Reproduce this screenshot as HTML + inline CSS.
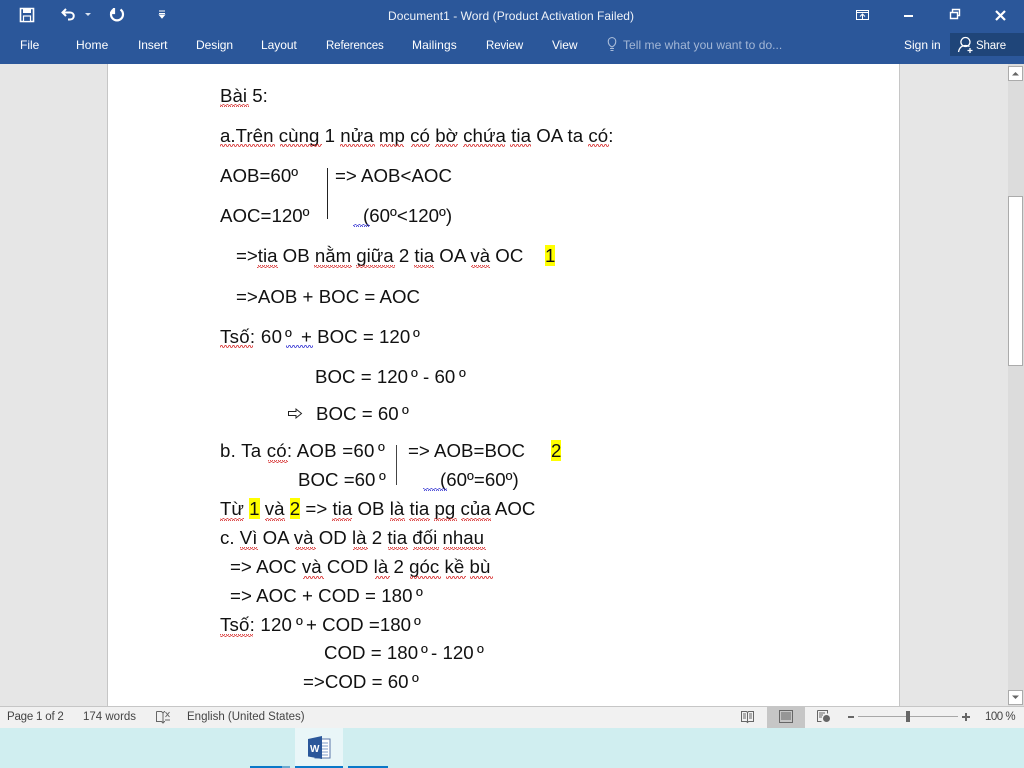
<!DOCTYPE html>
<html><head><meta charset="utf-8"><style>
html,body{margin:0;padding:0;width:1024px;height:768px;overflow:hidden;background:#fff}
div,span.a{position:absolute}
.t{position:absolute;white-space:nowrap;font-family:"Liberation Sans",sans-serif;font-size:12px;line-height:16px;color:#fff}
.l{position:absolute;white-space:pre;font-family:"Liberation Sans",sans-serif;font-size:18.67px;line-height:22px;color:#111;letter-spacing:.03px}
.l b{font-weight:normal;background:#ff0}
.s{position:absolute;white-space:nowrap;font-family:"Liberation Sans",sans-serif;font-size:11.5px;line-height:14px;color:#444}
svg{position:absolute;overflow:visible}
</style></head><body>
<div style="left:0;top:0;width:1024px;height:64px;background:#2b579a"></div>
<div style="left:950px;top:33px;width:74px;height:23px;background:#1f4579"></div>

<svg style="left:0;top:0" width="1024" height="64" fill="none" stroke="#fff">
<path d="M20.500 8.500h13v13h-13z" stroke-width="1.600"/><rect x="23" y="8" width="8" height="5" fill="#fff" stroke="none"/><rect x="23.500" y="16" width="7" height="5.500" fill="#2b579a" stroke-width="1.200"/>
<path d="M66 9l-3.500 3.500 3.500 3.500M63 12.500h7c5 0 5 7 0 7h-2" stroke-width="2"/>
<path d="M85 13h6l-3 3z" fill="#d8e2f0" stroke="none"/>
<path d="M113.500 9.500a6 6 0 1 0 7 0M114 8v5h-4" stroke-width="2.200"/>
<path d="M159 11h6M159 13.500h6M159.500 15l2.500 3 2.500-3z" fill="#fff" stroke-width="1"/>
<path d="M856.500 10.500h12v9h-12zM857 12.500h11M860 16.500l2.500-2.500 2.500 2.500M862.500 14v5" stroke-width="1"/>
<path d="M904 16h9" stroke-width="2"/>
<path d="M950.500 12.500h7v6h-7zM952.500 12v-2.500h7v6h-2" stroke-width="1.400"/>
<path d="M996 11l9 9M1005 11l-9 9" stroke-width="2.200"/>
<path d="M965.500 37.500a4.500 4.500 0 1 1-.1 0zM958.500 52c1-5 3.500-6.500 7-6.500 1.500 0 3 .3 4 1M970 48v5M967.500 50.500h5" stroke-width="1.300"/>
<path d="M612 47.500c-5-2.500-5-9 0-9.500 5 .5 5 7 0 9.500zM610 49h4M610.500 51h3" stroke="#a9bcd9" stroke-width="1.100" transform="translate(0,-.5)"/>
</svg>

<span class="t" style="left:388px;top:8px;letter-spacing:.05px;color:#eef2f8">Document1 - Word (Product Activation Failed)</span>
<span class="t" style="left:20px;top:37px">File</span>
<span class="t" style="left:76px;top:37px;letter-spacing:.1px">Home</span>
<span class="t" style="left:138px;top:37px;letter-spacing:-.1px">Insert</span>
<span class="t" style="left:196px;top:37px;letter-spacing:-.05px">Design</span>
<span class="t" style="left:261px;top:37px;letter-spacing:-.05px">Layout</span>
<span class="t" style="left:326px;top:38px;font-size:11.5px;letter-spacing:-.12px">References</span>
<span class="t" style="left:412px;top:37px;letter-spacing:.1px">Mailings</span>
<span class="t" style="left:486px;top:38px;font-size:11.5px;letter-spacing:-.1px">Review</span>
<span class="t" style="left:552px;top:37px;letter-spacing:-.1px">View</span>
<span class="t" style="left:623px;top:37px;color:#a3b7d6;letter-spacing:.04px">Tell me what you want to do...</span>
<span class="t" style="left:904px;top:37px;letter-spacing:0">Sign in</span>
<span class="t" style="left:976px;top:38px;font-size:11.5px;letter-spacing:-.15px">Share</span>

<div style="left:0;top:64px;width:1024px;height:643px;background:#e6e6e6"></div>
<div style="left:107px;top:64px;width:793px;height:642px;background:#fff;border-left:1px solid #c6c6c6;border-right:1px solid #c6c6c6;box-sizing:border-box"></div>
<div style="left:0;top:706px;width:1024px;height:1px;background:#c6c6c6"></div>

<div style="left:1008px;top:64px;width:16px;height:642px;background:#dcdcdc"></div>
<div style="left:1008px;top:66px;width:15px;height:15px;background:#fff;border:1px solid #ababab;box-sizing:border-box"></div>
<div style="left:1008px;top:196px;width:15px;height:170px;background:#fff;border:1px solid #ababab;box-sizing:border-box"></div>
<div style="left:1008px;top:690px;width:15px;height:15px;background:#fff;border:1px solid #ababab;box-sizing:border-box"></div>
<svg style="left:0;top:0" width="1024" height="768"><path d="M1012 75.500l3.500-3.500 3.500 3.500z" fill="#666"/><path d="M1012 695.500h7l-3.500 3.500z" fill="#666"/></svg>

<span class="l" style="left:220px;top:85px">Bài 5:</span>
<span class="l" style="left:220px;top:125px;letter-spacing:.05px">a.Trên cùng 1 nửa mp có bờ chứa tia OA ta có:</span>
<span class="l" style="left:220px;top:165px">AOB=60º</span>
<span class="l" style="left:335px;top:165px">=&gt; AOB&lt;AOC</span>
<span class="l" style="left:220px;top:205px">AOC=120º</span>
<span class="l" style="left:363px;top:205px">(60º&lt;120º)</span>
<span class="l" style="left:236px;top:245px;letter-spacing:0">=&gt;tia OB nằm giữa 2 tia OA và OC</span>
<span class="l" style="left:545px;top:245px"><b>1</b></span>
<span class="l" style="left:236px;top:286px">=&gt;AOB + BOC = AOC</span>
<span class="l" style="left:220px;top:326px;letter-spacing:.3px">Tsố: 60</span><span class="l" style="left:285px;top:326px">º</span><span class="l" style="left:301px;top:326px">+ BOC = 120</span><span class="l" style="left:413px;top:326px">º</span>
<span class="l" style="left:315px;top:366px">BOC = 120</span><span class="l" style="left:411px;top:366px">º</span><span class="l" style="left:423px;top:366px">- 60</span><span class="l" style="left:459px;top:366px">º</span>
<svg style="left:288px;top:408px" width="15" height="12" fill="none" stroke="#222"><path d="M.5 3.500h7.500v-2.500l5.500 4.500-5.500 4.500v-2.500h-7.500z" stroke-width="1"/></svg>
<span class="l" style="left:316px;top:403px">BOC = 60</span><span class="l" style="left:402px;top:403px">º</span>
<span class="l" style="left:220px;top:440px;letter-spacing:.24px">b. Ta có: AOB =60</span><span class="l" style="left:378px;top:440px">º</span>
<span class="l" style="left:408px;top:440px">=&gt; AOB=BOC</span>
<span class="l" style="left:551px;top:440px"><b>2</b></span>
<span class="l" style="left:298px;top:469px">BOC =60</span><span class="l" style="left:379px;top:469px">º</span>
<span class="l" style="left:440px;top:469px">(60º=60º)</span>
<span class="l" style="left:220px;top:498px;letter-spacing:.03px">Từ <b>1</b> và <b>2</b> =&gt; tia OB là tia pg của AOC</span>
<span class="l" style="left:220px;top:527px;letter-spacing:.02px">c. Vì OA và OD là 2 tia đối nhau</span>
<span class="l" style="left:230px;top:556px;letter-spacing:.04px">=&gt; AOC và COD là 2 góc kề bù</span>
<span class="l" style="left:230px;top:585px;letter-spacing:.06px">=&gt; AOC + COD = 180</span><span class="l" style="left:416px;top:585px">º</span>
<span class="l" style="left:220px;top:614px;letter-spacing:.2px">Tsố: 120</span><span class="l" style="left:296px;top:614px">º</span><span class="l" style="left:306px;top:614px">+ COD =180</span><span class="l" style="left:414px;top:614px">º</span>
<span class="l" style="left:324px;top:642px">COD = 180</span><span class="l" style="left:421px;top:642px">º</span><span class="l" style="left:431px;top:642px">- 120</span><span class="l" style="left:477px;top:642px">º</span>
<span class="l" style="left:303px;top:671px">=&gt;COD = 60</span><span class="l" style="left:412px;top:671px">º</span>

<div style="left:327px;top:168px;width:1px;height:51px;background:#222"></div>
<div style="left:396px;top:445px;width:1px;height:40px;background:#444"></div>

<svg style="left:0;top:0" width="1024" height="768" fill="none">
<defs>
<pattern id="r" width="4" height="3" patternUnits="userSpaceOnUse"><path d="M0 2.500L1 .5 2 .5 3 2.500 4 2.500" stroke="#d42020" stroke-width=".8" fill="none"/></pattern>
<pattern id="b" width="4" height="3" patternUnits="userSpaceOnUse"><path d="M0 2.500L1 .5 2 .5 3 2.500 4 2.500" stroke="#2a2ad0" stroke-width=".8" fill="none"/></pattern>
</defs>
<g fill="url(#r)">
<rect x="220" y="104" width="29" height="3"/>
<rect x="220" y="144" width="55" height="3"/><rect x="280" y="144" width="42" height="3"/><rect x="340" y="144" width="35" height="3"/><rect x="380" y="144" width="24" height="3"/><rect x="411" y="144" width="19" height="3"/><rect x="435" y="144" width="23" height="3"/><rect x="463" y="144" width="42" height="3"/><rect x="510" y="144" width="21" height="3"/><rect x="588" y="144" width="21" height="3"/>
<rect x="257" y="265" width="21" height="3"/><rect x="314" y="265" width="38" height="3"/><rect x="356" y="265" width="39" height="3"/><rect x="414" y="265" width="20" height="3"/><rect x="471" y="265" width="19" height="3"/>
<rect x="220" y="345" width="33" height="3"/>
<rect x="268" y="460" width="20" height="3"/>
<rect x="220" y="518" width="24" height="3"/><rect x="265" y="518" width="20" height="3"/><rect x="332" y="518" width="20" height="3"/><rect x="390" y="518" width="15" height="3"/><rect x="409" y="518" width="21" height="3"/><rect x="434" y="518" width="23" height="3"/><rect x="461" y="518" width="30" height="3"/>
<rect x="240" y="547" width="18" height="3"/><rect x="295" y="547" width="21" height="3"/><rect x="353" y="547" width="15" height="3"/><rect x="388" y="547" width="20" height="3"/><rect x="413" y="547" width="26" height="3"/><rect x="443" y="547" width="43" height="3"/>
<rect x="303" y="576" width="21" height="3"/><rect x="375" y="576" width="15" height="3"/><rect x="410" y="576" width="31" height="3"/><rect x="446" y="576" width="20" height="3"/><rect x="470" y="576" width="23" height="3"/>
<rect x="220" y="634" width="33" height="3"/>
</g>
<g fill="url(#b)">
<rect x="353" y="224" width="17" height="3"/>
<rect x="286" y="345" width="27" height="3"/>
<rect x="423" y="488" width="24" height="3"/>
</g>
</svg>

<div style="left:0;top:707px;width:1024px;height:21px;background:#f1f1f1"></div>
<span class="s" style="left:7px;top:710px;letter-spacing:-.2px">Page 1 of 2</span>
<span class="s" style="left:83px;top:710px">174 words</span>
<span class="s" style="left:187px;top:710px">English (United States)</span>
<span class="s" style="left:985px;top:710px;letter-spacing:-.5px">100 %</span>
<div style="left:767px;top:707px;width:38px;height:21px;background:#c6c6c6"></div>
<svg style="left:0;top:0" width="1024" height="768" fill="none" stroke="#666">
<path d="M156.500 711.500h5l1.500 1.500 1.500-1.500h.5M156.500 711.500v10h5l1.500 1.500 1.500-1.500h.5M163 713v10" stroke-width="1"/><path d="M165.500 712l4 5M169.500 712l-4 5M165 720h5" stroke-width="1"/>
<path d="M741.500 711.500h5l1 1 1-1h5v10h-5l-1 1-1-1h-5zM747.500 712.500v10M743 714h3M743 716h3M743 718h3M749 714h3M749 716h3M749 718h3" stroke-width="1"/>
<path d="M779.500 710.500h13v12h-13zM781 713h10M781 715h10M781 717h10M781 719h10" stroke-width="1"/>
<path d="M817.500 710.500h10v3M817.500 710.500v11h4M819 713h6M819 715h4M819 717h3" stroke-width="1"/><circle cx="826.500" cy="718.500" r="3.500" fill="#666" stroke="none"/>
<path d="M848 717h6" stroke-width="2"/>
<path d="M858 716.500h100" stroke="#a8a8a8" stroke-width="1"/>
<path d="M962 717h8M966 713v8" stroke-width="2"/>
<rect x="906" y="711" width="4" height="11" fill="#666" stroke="none"/>
</svg>

<div style="left:0;top:728px;width:1024px;height:40px;background:#d0eef0"></div>
<div style="left:295px;top:728px;width:48px;height:40px;background:#e9f6f8"></div>
<div style="left:250px;top:766px;width:33px;height:2px;background:#0a78c8"></div>
<div style="left:282px;top:766px;width:8px;height:2px;background:#6aaad0"></div>
<div style="left:295px;top:766px;width:48px;height:2px;background:#0a78c8"></div>
<div style="left:348px;top:766px;width:40px;height:2px;background:#0a78c8"></div>
<svg style="left:0;top:0" width="1024" height="768">
<rect x="315" y="739" width="15" height="19" fill="#fff" stroke="#5a76a8" stroke-width="1"/>
<path d="M322 743h6M322 746h6M322 749h6M322 752h6M322 755h6" stroke="#7f9cc9" stroke-width="1"/>
<path d="M308 739l14-3v23l-14-2.500z" fill="#2b579a"/>
<text x="310" y="752" font-family="Liberation Sans,sans-serif" font-size="10" font-weight="bold" fill="#fff">W</text>
</svg>
</body></html>
